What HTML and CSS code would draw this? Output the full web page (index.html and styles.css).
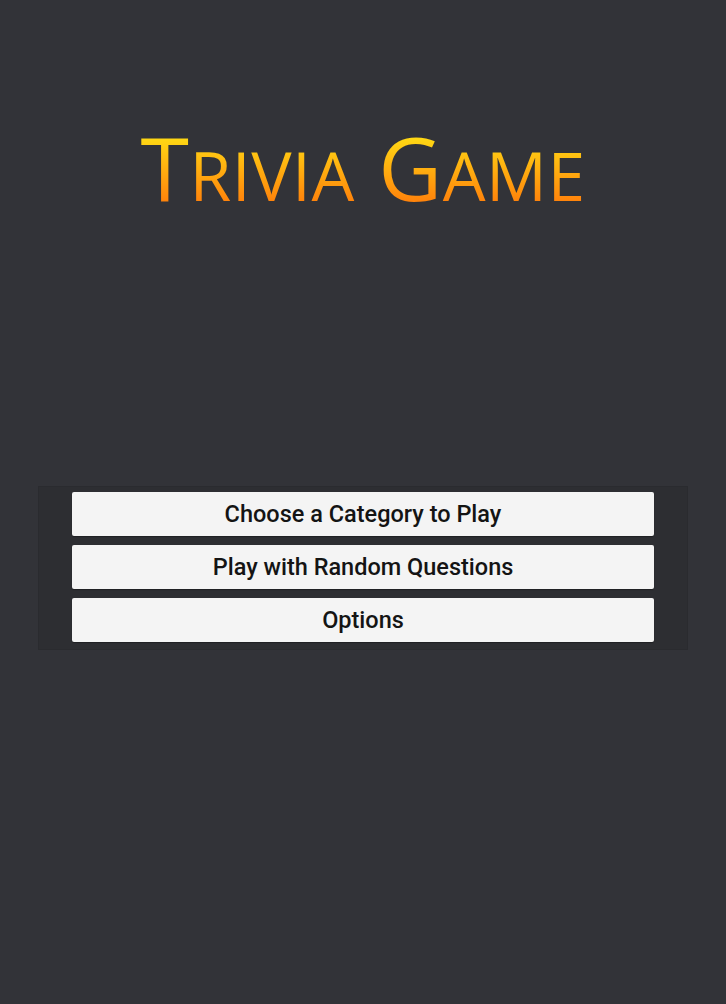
FILE: index.html
```html
<!DOCTYPE html>
<html lang="en">
<head>
  <meta charset="UTF-8" />
  <meta name="viewport" content="width=device-width, initial-scale=1.0"/>
  <title>Trivia Game</title>
  <link rel="stylesheet" href="styles.css">
</head>
<body>
  <main class="screen">
    <header class="title-wrap">
      <h1 class="title">T<span class="sc">RIVIA</span> G<span class="sc">AME</span></h1>
    </header>

    <section class="menu">
      <button class="menu-btn">Choose a Category to Play</button>
      <button class="menu-btn">Play with Random Questions</button>
      <button class="menu-btn">Options</button>
    </section>
  </main>
</body>
</html>
```

FILE: styles.css
```css
* {
  margin: 0;
  padding: 0;
  box-sizing: border-box;
}

body {
  font-family: 'Roboto', sans-serif;
  background: #323338;
  color: #111;
  min-height: 100vh;
}

.screen {
  display: flex;
  flex-direction: column;
  align-items: center;
  min-height: 100vh;
}

.title-wrap {
  padding-top: 115px;
  height: 486px;
}

.title {
  font-family: 'Open Sans', sans-serif;
  font-weight: 400;
  font-size: 88px;
  letter-spacing: 0.5px;
  line-height: 1.2;
  background: linear-gradient(180deg, #ffd814 22%, #ff7a0a 88%);
  -webkit-background-clip: text;
  background-clip: text;
  color: transparent;
}

/* hand-made small caps, a bit taller than the browser's */
.title .sc {
  font-size: 0.77em;
}

.menu {
  width: 650px;
  background: #2d2e32;
  border: 1px solid #2a2b2f;
  padding: 5px 33px 7px;
  display: flex;
  flex-direction: column;
  gap: 9px;
}

.menu-btn {
  height: 44px;
  border: none;
  border-radius: 2px;
  background: #f4f4f4;
  box-shadow: 0 1px 1px rgba(0, 0, 0, 0.3);
  font-family: 'Roboto', sans-serif;
  font-weight: 500;
  font-size: 23.5px;
  color: #141414;
  cursor: pointer;
}
```
